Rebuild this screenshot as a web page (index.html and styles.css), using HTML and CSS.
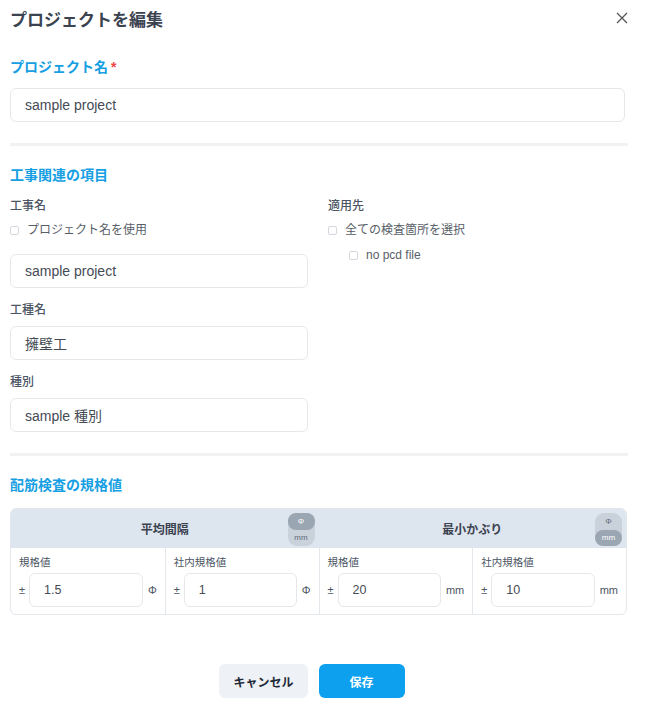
FILE: index.html
```html
<!DOCTYPE html>
<html>
	<head>
		<meta charset="utf-8" />
		<title>プロジェクトを編集</title>
		<link rel="stylesheet" href="styles.css">
	</head>
	<body>
		<div class="modal">
			<div class="modal-head">
				<h1>プロジェクトを編集</h1>
				<button class="close" type="button">
					<svg width="12" height="12" viewBox="0 0 12 12"><path d="M1 1L11 11M11 1L1 11" stroke="#555" stroke-width="1.3" fill="none"/></svg>
				</button>
			</div>

			<div class="blue-label first">プロジェクト名<span class="req">*</span></div>
			<input class="text-input name-input" type="text" value="sample project" />

			<div class="divider"></div>

			<h2 class="blue-label section">工事関連の項目</h2>
			<div class="cols">
				<div class="col">
					<div class="label">工事名</div>
					<label class="check"><i></i>プロジェクト名を使用</label>
					<input class="text-input after-check" type="text" value="sample project" />
					<div class="label field">工種名</div>
					<input class="text-input" type="text" value="擁壁工" />
					<div class="label field">種別</div>
					<input class="text-input" type="text" value="sample 種別" />
				</div>
				<div class="col">
					<div class="label">適用先</div>
					<label class="check"><i></i>全ての検査箇所を選択</label>
					<label class="check sub"><i></i>no pcd file</label>
				</div>
			</div>

			<div class="divider"></div>

			<h2 class="blue-label section">配筋検査の規格値</h2>
			<div class="spec">
				<div class="spec-head">
					<div class="group">平均間隔
						<div class="unit-toggle"><span class="on">Φ</span><span>mm</span></div>
					</div>
					<div class="group">最小かぶり
						<div class="unit-toggle"><span>Φ</span><span class="on">mm</span></div>
					</div>
				</div>
				<div class="spec-body">
					<div class="cell">
						<div class="cell-label">規格値</div>
						<div class="cell-row"><span class="pm">±</span><input type="text" value="1.5" /><span class="unit">Φ</span></div>
					</div>
					<div class="cell">
						<div class="cell-label">社内規格値</div>
						<div class="cell-row"><span class="pm">±</span><input type="text" value="1" /><span class="unit">Φ</span></div>
					</div>
					<div class="cell">
						<div class="cell-label">規格値</div>
						<div class="cell-row"><span class="pm">±</span><input type="text" value="20" /><span class="unit">mm</span></div>
					</div>
					<div class="cell">
						<div class="cell-label">社内規格値</div>
						<div class="cell-row"><span class="pm">±</span><input type="text" value="10" /><span class="unit">mm</span></div>
					</div>
				</div>
			</div>

			<div class="actions">
				<button class="btn cancel" type="button">キャンセル</button>
				<button class="btn save" type="button">保存</button>
			</div>
		</div>
	</body>
</html>
```

FILE: styles.css
```css
*{margin: 0;padding: 0;box-sizing: border-box;}
body{background: #fff;font-family: "Liberation Sans", "Noto Sans CJK JP", sans-serif;color: #374151;}
.modal{width: 645px;padding: 9px 18px 0 10px;}

.modal-head{display: flex;justify-content: space-between;align-items: flex-start;}
.modal-head h1{font-size: 17px;line-height: 24px;font-weight: bold;color: #3b4250;}
.close{border: none;background: none;width: 12px;height: 12px;margin-top: 3px;margin-right: -1px;display: block;}
.close svg{display: block;}

.blue-label{font-size: 14px;line-height: 20px;font-weight: bold;color: #179fe3;}
.blue-label.first{margin-top: 24px;}
.req{color: #ef4444;margin-left: 3px;}
.section{margin-top: 19px;}

.text-input{display: block;width: 100%;height: 34px;border: 1px solid #e5e7eb;border-radius: 6px;padding: 0 14px;
font-family: inherit;font-size: 14px;color: #454b55;background: #fff;outline: none;}
.name-input{margin-top: 11px;width: 615px;}

.divider{height: 3px;background: #f0f2f4;margin-top: 21px;margin-right: -1px;}

.cols{display: grid;grid-template-columns: 298px 298px;column-gap: 20px;margin-top: 12px;}
.label{font-size: 12px;line-height: 18px;color: #4b5563;font-weight: 500;}
.label.field{margin-top: 13px;margin-bottom: 7px;}
.check{display: flex;align-items: center;margin-top: 6px;font-size: 12px;line-height: 18px;color: #585e68;}
.check i{width: 9px;height: 9px;border: 1px solid #d4d8de;border-radius: 2px;margin-right: 8px;background: #fff;}
.check.sub{margin-top: 7px;padding-left: 21px;}
.after-check{margin-top: 15px;}

.spec{margin-top: 13px;border: 1px solid #e3e7ec;border-radius: 6px;overflow: hidden;}
.spec-head{display: grid;grid-template-columns: minmax(0, 1fr) minmax(0, 1fr);background: #dde5ee;}
.spec-head .group{position: relative;height: 39px;display: flex;align-items: center;justify-content: center;
font-size: 12px;font-weight: bold;color: #3b4250;}
.unit-toggle{position: absolute;right: 4px;top: 4px;width: 27px;height: 33px;border-radius: 9px;background: #c9d1db;
display: flex;flex-direction: column;}
.unit-toggle span{flex: 1;display: flex;align-items: center;justify-content: center;font-size: 8px;font-weight: normal;
color: #5f6b78;border-radius: 8px;}
.unit-toggle span.on{background: #9ba6b3;color: #fff;}

.spec-body{display: grid;grid-template-columns: repeat(4, minmax(0, 1fr));}
.cell{padding: 6px 8px 7px 8px;border-left: 1px solid #e3e7ec;}
.cell:first-child{border-left: none;}
.cell-label{font-size: 10.5px;line-height: 16px;color: #4b5563;}
.cell-row{display: flex;align-items: center;margin-top: 3px;font-size: 11px;color: #4b5563;}
.cell-row .pm{width: 7px;margin-right: 3px;flex: none;}
.cell-row input{flex: 1;width: 0;min-width: 0;height: 34px;border: 1px solid #e5e7eb;border-radius: 6px;padding: 0 14px;
font-family: inherit;font-size: 12.5px;color: #454b55;outline: none;}
.cell-row .unit{margin-left: 5px;flex: none;}

.actions{display: flex;justify-content: center;gap: 11px;margin-top: 49px;padding-right: 13px;}
.btn{min-width: 86px;height: 34px;padding: 0 14px;border: none;border-radius: 6px;font-family: inherit;
font-size: 12px;font-weight: bold;}
.cancel{background: #eef1f5;color: #1f2937;}
.save{background: #0ca0ee;color: #fff;}
```
